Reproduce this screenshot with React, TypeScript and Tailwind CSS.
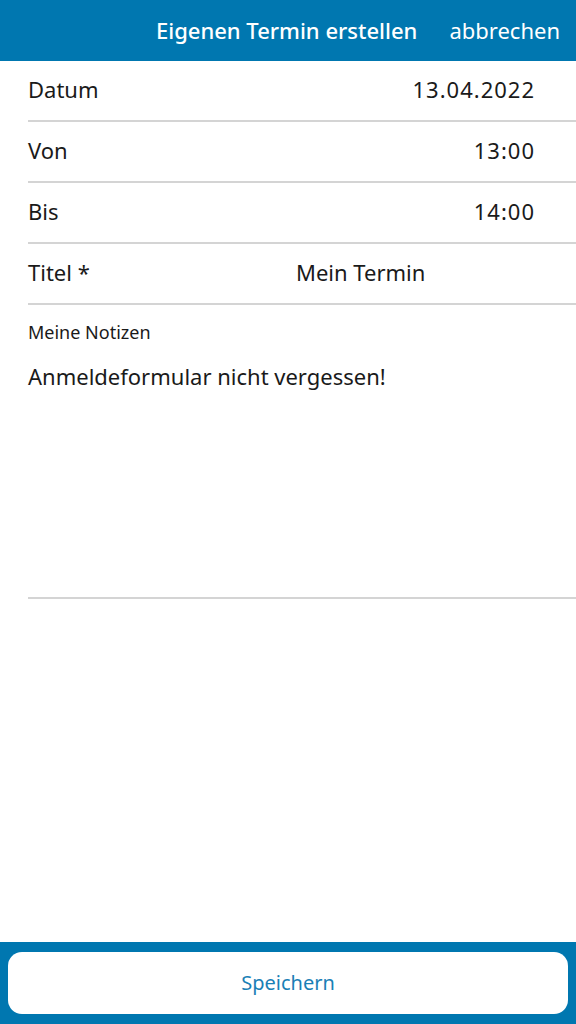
import React from "react";

const font = { fontFamily: '"Noto Sans", "Open Sans", sans-serif' };

function Row({ label, value }: { label: string; value: string }) {
  return (
    <div className="ml-[28px] flex h-[61px] items-center justify-between border-b-2 border-[#d4d4d4] pb-[3px] pr-[41px] text-[22px] text-[#1a1a1a]">
      <span>{label}</span>
      <span className="tracking-[1px]">{value}</span>
    </div>
  );
}

export default function App() {
  return (
    <div className="flex h-[1024px] w-[576px] flex-col bg-white" style={font}>
      <div className="flex h-[61px] shrink-0 items-center justify-end gap-[32px] bg-[#0077b0] pr-[16px] text-[22px] text-white">
        <span className="font-medium">Eigenen Termin erstellen</span>
        <span>abbrechen</span>
      </div>
      <Row label="Datum" value="13.04.2022" />
      <Row label="Von" value="13:00" />
      <Row label="Bis" value="14:00" />
      <div className="ml-[28px] flex h-[61px] items-center border-b-2 border-[#d4d4d4] pb-[3px] text-[22px] text-[#1a1a1a]">
        <span className="w-[268px]">Titel *</span>
        <span>Mein Termin</span>
      </div>
      <div className="ml-[28px] h-[294px] border-b-2 border-[#d4d4d4]">
        <div className="pt-[14px] text-[18px] text-[#1a1a1a]">Meine Notizen</div>
        <div className="pt-[14px] text-[22px] text-[#1a1a1a]">Anmeldeformular nicht vergessen!</div>
      </div>
      <div className="flex-1" />
      <div className="flex h-[82px] shrink-0 items-start bg-[#0077b0] px-[8px] pt-[10px]">
        <div className="flex h-[62px] w-full items-center justify-center rounded-[14px] bg-white text-[20px] text-[#1a80b6]">
          Speichern
        </div>
      </div>
    </div>
  );
}
